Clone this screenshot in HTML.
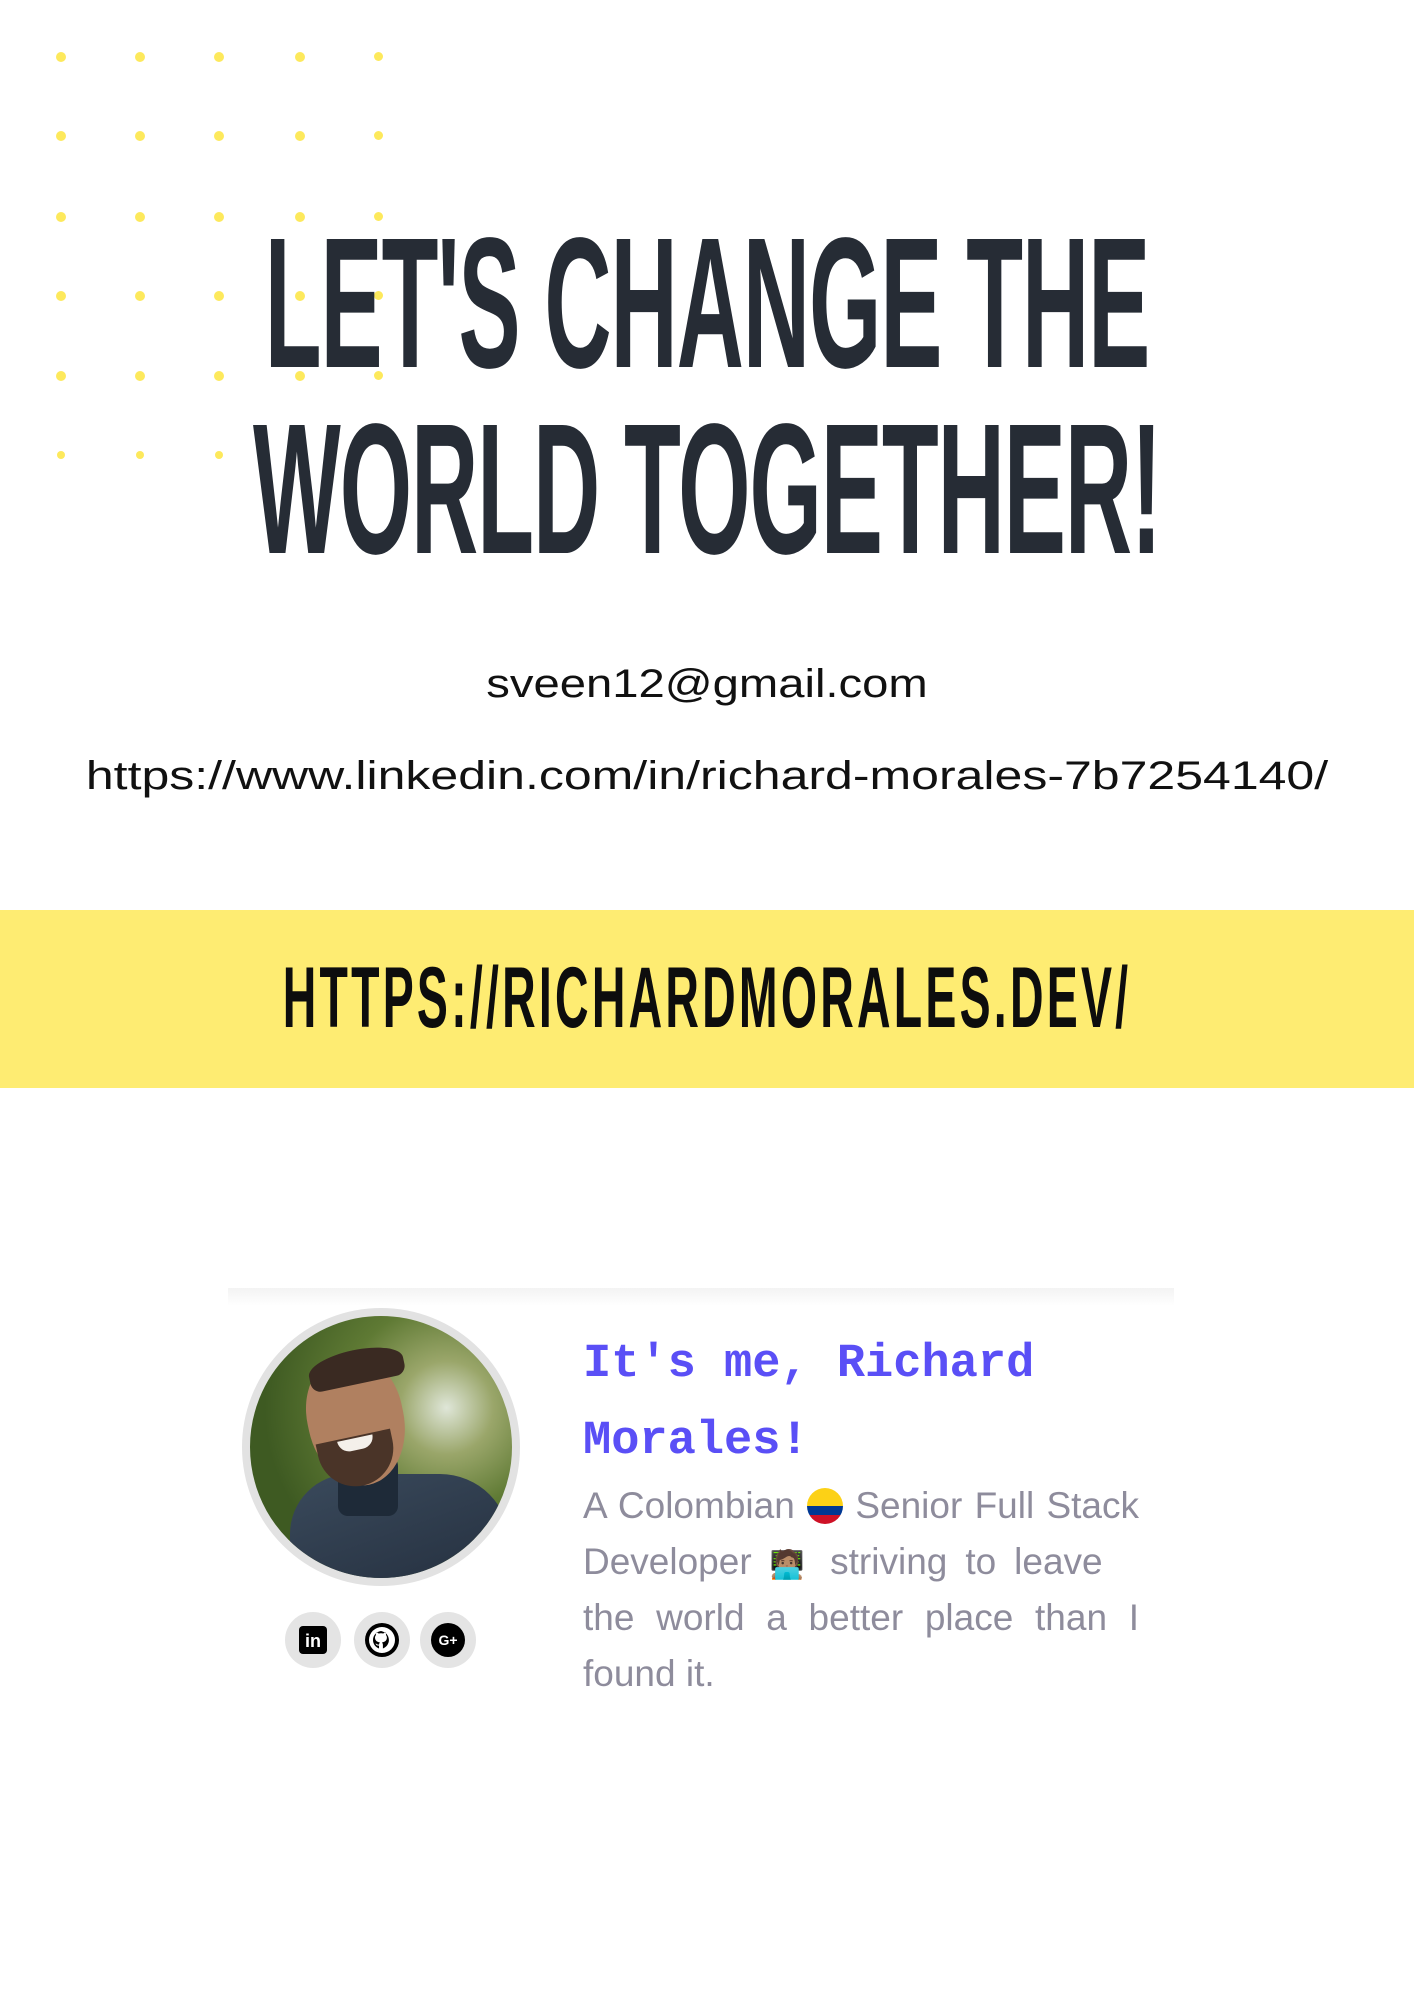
<!DOCTYPE html>
<html><head><meta charset="utf-8"><style>
html,body{margin:0;padding:0;background:#fff;}
body{width:1414px;height:2000px;position:relative;overflow:hidden;font-family:"Liberation Sans",sans-serif;}
.dot{position:absolute;width:10px;height:10px;border-radius:50%;background:#fde95c;}
.head{position:absolute;left:707px;color:#262c35;font-weight:bold;font-family:"Liberation Sans Narrow","Liberation Sans",sans-serif;white-space:nowrap;transform-origin:0 0;}
.t{position:absolute;left:707px;color:#111;white-space:nowrap;}
.band{position:absolute;left:0;top:910px;width:1414px;height:178px;background:#feec72;}
.ic{position:absolute;width:56px;height:56px;border-radius:50%;background:#e4e4e4;}
.ic div{position:absolute;left:10px;top:10px;width:36px;height:36px;border-radius:50%;background:#fff;}
.p div{text-align:justify;text-align-last:justify;white-space:nowrap;height:56px;}
</style></head><body>
<div class="dot" style="left:56px;top:52px"></div><div class="dot" style="left:135px;top:52px"></div><div class="dot" style="left:214px;top:52px"></div><div class="dot" style="left:295px;top:52px"></div><div class="dot" style="left:374px;top:52px;width:9px;height:9px"></div>
<div class="dot" style="left:56px;top:131px"></div><div class="dot" style="left:135px;top:131px"></div><div class="dot" style="left:214px;top:131px"></div><div class="dot" style="left:295px;top:131px"></div><div class="dot" style="left:374px;top:131px;width:9px;height:9px"></div>
<div class="dot" style="left:56px;top:212px"></div><div class="dot" style="left:135px;top:212px"></div><div class="dot" style="left:214px;top:212px"></div><div class="dot" style="left:295px;top:212px"></div><div class="dot" style="left:374px;top:212px;width:9px;height:9px"></div>
<div class="dot" style="left:56px;top:291px"></div><div class="dot" style="left:135px;top:291px"></div><div class="dot" style="left:214px;top:291px"></div><div class="dot" style="left:295px;top:291px"></div><div class="dot" style="left:374px;top:291px;width:9px;height:9px"></div>
<div class="dot" style="left:56px;top:371px"></div><div class="dot" style="left:135px;top:371px"></div><div class="dot" style="left:214px;top:371px"></div><div class="dot" style="left:295px;top:371px"></div><div class="dot" style="left:374px;top:371px;width:9px;height:9px"></div>
<div class="dot" style="left:57px;top:451px;width:8px;height:8px"></div><div class="dot" style="left:136px;top:451px;width:8px;height:8px"></div><div class="dot" style="left:215px;top:451px;width:8px;height:8px"></div>

<div class="head" style="top:214px;font-size:186px;line-height:180px;transform:scaleX(0.5) translateX(-50%);letter-spacing:-2px">LET'S CHANGE THE</div>
<div class="head" style="top:400px;font-size:186px;line-height:180px;transform:scaleX(0.5) translateX(-50%);letter-spacing:-2px">WORLD TOGETHER!</div>

<div class="t" style="top:662px;font-size:40px;transform-origin:0 0;transform:scaleX(1.18) translateX(-50%);">sveen12@gmail.com</div>
<div class="t" style="top:754px;font-size:40px;transform-origin:0 0;transform:scaleX(1.25) translateX(-50%);">https://www.linkedin.com/in/richard-morales-7b7254140/</div>

<div class="band"></div>
<div class="head" style="top:955px;font-size:86px;line-height:86px;color:#0d0d0d;letter-spacing:6px;transform:scaleX(0.54) translateX(-50%);">HTTPS://RICHARDMORALES.DEV/</div>

<div style="position:absolute;left:228px;top:1288px;width:946px;height:18px;background:linear-gradient(#f3f3f3,#fff);"></div>

<div style="position:absolute;left:242px;top:1308px;width:262px;height:262px;border-radius:50%;border:8px solid #e2e2e2;overflow:hidden;background:radial-gradient(circle at 75% 35%,#dfe6d8 0,#9aa66a 18%,#5f7a34 40%,#3e5a22 70%);">
 <div style="position:absolute;left:40px;top:158px;width:220px;height:160px;border-radius:60px 70px 0 0;background:linear-gradient(160deg,#3a4a5c,#2a3646 60%,#4a5a70);"></div>
 <div style="position:absolute;left:88px;top:140px;width:60px;height:60px;background:#1e2a38;border-radius:10px;"></div>
 <div style="position:absolute;left:58px;top:40px;width:96px;height:130px;border-radius:45% 45% 50% 50%;background:#b08060;transform:rotate(-12deg);"></div>
 <div style="position:absolute;left:58px;top:34px;width:96px;height:34px;border-radius:50% 50% 10px 10px;background:#3a2a22;transform:rotate(-12deg);"></div>
 <div style="position:absolute;left:70px;top:120px;width:76px;height:50px;border-radius:0 0 40px 40px;background:#4a3428;transform:rotate(-12deg);"></div>
 <div style="position:absolute;left:88px;top:122px;width:36px;height:12px;border-radius:0 0 18px 18px;background:#f4f0ea;transform:rotate(-12deg);"></div>
</div>

<div class="ic" style="left:285px;top:1612px"><div style="background:#000;border-radius:4px;left:14px;top:14px;width:28px;height:28px;color:#fff;font:bold 18px 'Liberation Sans';text-align:center;line-height:30px">in</div></div>
<div class="ic" style="left:354px;top:1612px"><div style="background:#000;left:11px;top:11px;width:34px;height:34px;"><svg width="34" height="34" viewBox="0 0 34 34"><circle cx="17" cy="17" r="13" fill="#fff"/><path d="M17 8c-5 0-9 4-9 9 0 4 2.5 7 6 8.5v-3c-2.5.5-3-1-3.5-2 1 0 1.5 1.5 3.5 1 0-1 .5-1.5 1-2-3-.5-5-2-5-5 0-1 .5-2 1-2.5-.2-.5-.2-1.5.2-2.5 1 0 2 .7 2.5 1 1.5-.4 3-.4 4.5 0 .5-.3 1.5-1 2.5-1 .4 1 .4 2 .2 2.5.6.5 1 1.5 1 2.5 0 3-2 4.5-5 5 .6.6 1 1.2 1 2.5v3.5c3.5-1.5 6-4.5 6-8.5 0-5-4-9-9-9z" fill="#000"/></svg></div></div>
<div class="ic" style="left:420px;top:1612px"><div style="background:#000;left:11px;top:11px;width:34px;height:34px;color:#fff;font:bold 14px 'Liberation Sans';text-align:center;line-height:34px">G+</div></div>

<div style="position:absolute;left:583px;top:1326px;width:560px;font-family:'Liberation Mono',monospace;font-weight:bold;font-size:47px;line-height:77px;color:#5a4ff6;">It's me, Richard<br>Morales!</div>
<div class="p" style="position:absolute;left:583px;top:1478px;font-family:'Liberation Sans Narrow','Liberation Sans',sans-serif;font-size:37px;line-height:56px;color:#8e8c9c;">
<div style="width:556px">A Colombian <span style="display:inline-block;width:36px;height:36px;border-radius:50%;vertical-align:-6px;background:linear-gradient(#fcd116 0,#fcd116 50%,#003893 50%,#003893 75%,#ce1126 75%)"></span> Senior Full Stack</div>
<div style="width:535px">Developer <span style="font-size:28px">🧑🏽‍💻</span> striving to leave</div>
<div style="width:556px">the world a better place than I</div>
<div style="text-align:left;text-align-last:left">found it.</div>
</div>
</body></html>
